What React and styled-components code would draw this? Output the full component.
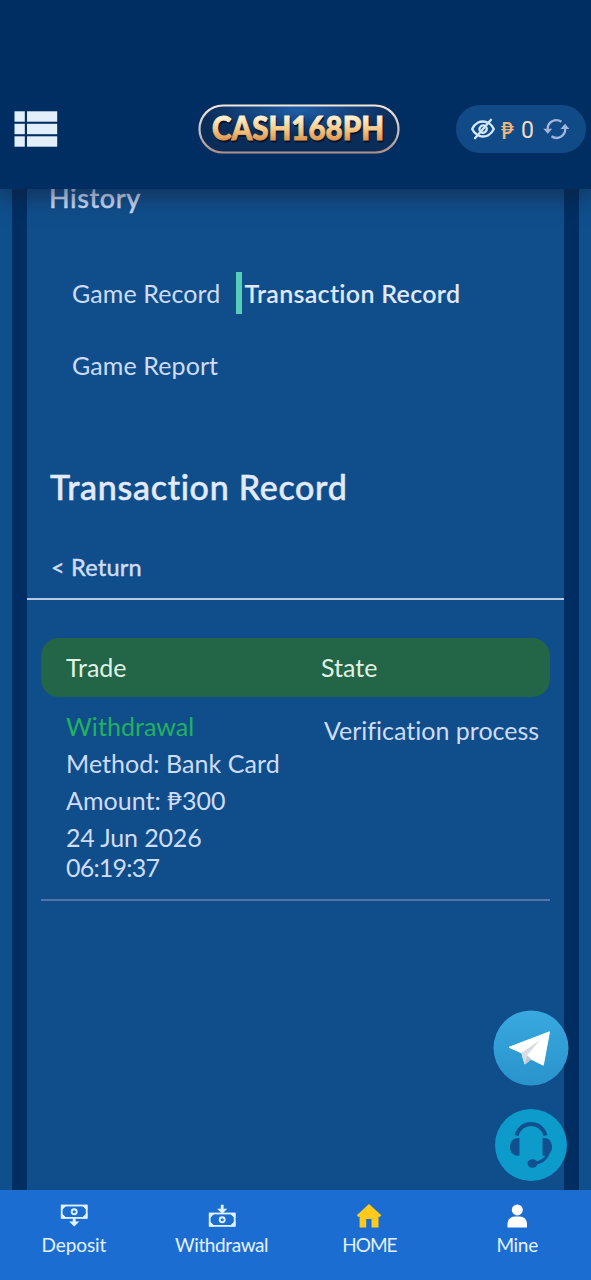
import styled, { createGlobalStyle } from 'styled-components';

const records = [
  {
    id: 1,
    type: 'Withdrawal',
    method: 'Method: Bank Card',
    amount: 'Amount: ₱300',
    date: '24 Jun 2026',
    time: '06:19:37',
    state: 'Verification process',
  },
];

const MenuIcon = () => (
  <svg width="44" height="37" viewBox="0 0 44 37" fill="#e3eefb">
    {[0.3, 12.8, 25.3].map((y) => (
      <g key={y}>
        <rect x="0.5" y={y} width="10.3" height="10.4" />
        <rect x="13" y={y} width="30.2" height="10.4" />
      </g>
    ))}
  </svg>
);

const Logo = () => (
  <svg width="202" height="50" viewBox="0 0 202 50">
    <defs>
      <linearGradient id="gold" x1="0" y1="0" x2="0" y2="1">
        <stop offset="0.25" stopColor="#fff0cf" />
        <stop offset="0.55" stopColor="#f6c887" />
        <stop offset="0.85" stopColor="#dd9148" />
      </linearGradient>
      <linearGradient id="rim" x1="0" y1="0" x2="0" y2="1">
        <stop offset="0" stopColor="#f3e6d6" />
        <stop offset="0.5" stopColor="#c9c4c6" />
        <stop offset="1" stopColor="#b08f86" />
      </linearGradient>
      <radialGradient id="plate" cx="0.5" cy="0.1" r="0.5">
        <stop offset="0" stopColor="#1f5ea8" />
        <stop offset="1" stopColor="#0a2c58" />
      </radialGradient>
    </defs>
    <rect
      x="1.5"
      y="1.5"
      width="199"
      height="47"
      rx="23.5"
      fill="url(#plate)"
      stroke="url(#rim)"
      strokeWidth="2.2"
    />
    <LogoText
      x="15"
      y="37.5"
      textLength="172"
      lengthAdjust="spacingAndGlyphs"
      fill="#06152c"
      stroke="#06152c"
    >
      CASH168PH
    </LogoText>
    <LogoText
      x="14"
      y="36"
      textLength="172"
      lengthAdjust="spacingAndGlyphs"
      fill="url(#gold)"
      stroke="url(#gold)"
    >
      CASH168PH
    </LogoText>
  </svg>
);

const EyeOffIcon = () => (
  <svg
    width="24"
    height="22"
    viewBox="0 0 24 22"
    fill="none"
    stroke="#d5e7fb"
    strokeWidth="2.3"
    strokeLinecap="round"
  >
    <path d="M15.800 4.200C8.800 1.800 3.500 6 1.200 11c1 2.300 2.600 4.300 4.700 5.600" />
    <path d="M8.200 17.800c7.100 2.400 12.300-1.800 14.600-6.800-1-2.300-2.600-4.300-4.600-5.600" />
    <path d="M14 7.700a4 4 0 0 0-5.500 4.600M10 14.300a4 4 0 0 0 5.600-4.600" />
    <path d="M20 1.800 4 20.200" />
  </svg>
);

const RefreshIcon = () => (
  <svg width="27" height="22" viewBox="0 0 27 22" fill="none">
    <g stroke="#a3b4dc" strokeWidth="2.300">
      <path d="M4.700 11.500A8.700 8.700 0 0 1 18.400 3.800" />
      <path d="M22 9.500A8.700 8.700 0 0 1 8.500 18.300" />
    </g>
    <path d="M0.300 10.800h8.900l-4.400 5zM17.500 11h8.900l-4.400-5.200z" fill="#a3b4dc" />
  </svg>
);

const TelegramIcon = () => (
  <svg width="76" height="76" viewBox="0 0 76 76">
    <defs>
      <linearGradient id="sky" x1="0" y1="0" x2="0" y2="1">
        <stop offset="0" stopColor="#38a9df" />
        <stop offset="1" stopColor="#2a93cc" />
      </linearGradient>
    </defs>
    <circle cx="38" cy="38" r="37.500" fill="url(#sky)" />
    <path
      d="M16 37.300 56.500 21.800 50.300 55.200 37.800 49 32 54 28.800 43z"
      fill="#fff"
      stroke="#fff"
      strokeLinejoin="round"
    />
    <path d="M28.500 43 47 30 34.500 44.800 31.500 54.500z" fill="#d5dce4" />
    <path d="M31.500 54.500 34.300 45.500 38.500 49.400z" fill="#bcc6d2" />
  </svg>
);

const HeadsetIcon = () => (
  <svg width="72" height="72" viewBox="0 0 72 72">
    <circle cx="36" cy="36" r="36" fill="#0d9bcb" />
    <path
      d="M21.500 26.500C25.500 11 46.500 11 50.500 26.500"
      fill="none"
      stroke="#10508f"
      strokeWidth="4"
    />
    <path
      d="M24.500 29.200v17.400c-5 .8-9.500-2.700-9.500-8.700s4.500-9.500 9.500-8.700z"
      fill="#10508f"
    />
    <path
      d="M47.500 29.200v17.400c5 .8 9.500-2.700 9.500-8.700s-4.500-9.500-9.500-8.700z"
      fill="#10508f"
    />
    <path
      d="M53 44.500C51 50.500 46 53.800 38 54.500"
      fill="none"
      stroke="#10508f"
      strokeWidth="3"
    />
    <ellipse cx="37.500" cy="54.500" rx="5" ry="4.200" fill="#10508f" />
  </svg>
);

const Banknote = ({ y }) => (
  <g>
    <rect x="1.700" y={y} width="25" height="12.400" fill="none" stroke="#e2f3ff" strokeWidth="1.800" />
    <path
      d={`M1.500 ${y + 4.500}v-4.500h4.500zM26.900 ${y + 4.500}v-4.500h-4.500zM1.500 ${y + 7.900}v4.500h4.500zM26.900 ${y + 7.900}v4.500h-4.500z`}
      fill="#e2f3ff"
      stroke="#e2f3ff"
    />
    <circle cx="14.200" cy={y + 6.200} r="2.500" fill="none" stroke="#e2f3ff" strokeWidth="1.900" />
  </g>
);

const DepositIcon = () => (
  <svg width="28" height="26" viewBox="0 0 28 26">
    <Banknote y={2.500} />
    <path d="M12.800 14.500h2.800v4h3.700l-5.100 5-5.100-5h3.700z" fill="#e2f3ff" />
  </svg>
);

const WithdrawalIcon = () => (
  <svg width="28" height="26" viewBox="0 0 28 26">
    <Banknote y={10.500} />
    <path d="M12.800 1.800h2.800v4h3.700l-5.100 5-5.100-5h3.700z" fill="#e2f3ff" />
  </svg>
);

const HomeIcon = () => (
  <svg width="28" height="26" viewBox="0 0 28 26">
    <path
      d="M14 1 1.800 12.300l1.400 1.500h1.400V24.500h6.600V16h5.300v8.500h7V13.800h1.500l1.300-1.500z"
      fill="#ffca1c"
    />
  </svg>
);

const MineIcon = () => (
  <svg width="28" height="26" viewBox="0 0 28 26" fill="#fff">
    <circle cx="14.300" cy="6.900" r="5.500" />
    <path d="M4.500 24.500v-3.500c0-4.500 3.500-7.500 7.500-7.500h4.500c4.500 0 7.500 3 7.500 7.500v3.500z" />
  </svg>
);

const App = () => (
  <>
    <GlobalStyle />
    <StyledPage>
      <StyledHeader>
        <MenuIcon />
        <Logo />
        <StyledBalance>
          <EyeOffIcon />
          <StyledPeso>₱</StyledPeso>
          <StyledZero>0</StyledZero>
          <RefreshIcon />
        </StyledBalance>
      </StyledHeader>
      <StyledMain>
        <StyledPanel>
          <StyledSection>History</StyledSection>
          <StyledTabs>
            <StyledTab>Game Record</StyledTab>
            <StyledTab $active>Transaction Record</StyledTab>
            <StyledTab>Game Report</StyledTab>
          </StyledTabs>
          <StyledTitle>Transaction Record</StyledTitle>
          <StyledReturn>&lt; Return</StyledReturn>
          <StyledTable>
            <StyledTableHead>
              <span>Trade</span>
              <span>State</span>
            </StyledTableHead>
            {records.map((record) => (
              <StyledRow key={record.id}>
                <StyledTrade>
                  <StyledType>{record.type}</StyledType>
                  <span>{record.method}</span>
                  <span>{record.amount}</span>
                  <StyledDate>
                    {record.date} <StyledTime>{record.time}</StyledTime>
                  </StyledDate>
                </StyledTrade>
                <StyledState>{record.state}</StyledState>
              </StyledRow>
            ))}
          </StyledTable>
        </StyledPanel>
        <StyledFloating>
          <TelegramIcon />
          <HeadsetIcon />
        </StyledFloating>
      </StyledMain>
      <StyledNav>
        <StyledNavItem>
          <DepositIcon />
          Deposit
        </StyledNavItem>
        <StyledNavItem $spacing="-0.4px">
          <WithdrawalIcon />
          Withdrawal
        </StyledNavItem>
        <StyledNavItem $spacing="-1px">
          <HomeIcon />
          HOME
        </StyledNavItem>
        <StyledNavItem $spacing="-0.3px">
          <MineIcon />
          Mine
        </StyledNavItem>
      </StyledNav>
    </StyledPage>
  </>
);

const GlobalStyle = createGlobalStyle`
  * {
    box-sizing: border-box;
  }
  body {
    margin: 0;
    background-color: #0f4f8c;
    font-family: Lato, 'Noto Sans', sans-serif;
    font-variant-ligatures: none;
  }
  svg {
    display: block;
    flex-shrink: 0;
  }
`;

const LogoText = styled.text`
  font-family: Lato, sans-serif;
  font-weight: 900;
  font-size: 32px;
  stroke-width: 0.9px;
`;

const StyledPage = styled.div`
  display: flex;
  flex-direction: column;
  width: 591px;
  height: 1280px;
  overflow: hidden;
`;
const StyledHeader = styled.header`
  position: relative;
  display: flex;
  align-items: center;
  justify-content: space-between;
  flex-shrink: 0;
  height: 189px;
  padding: 69px 5px 0 14px;
  background-color: #002e63;
  box-shadow: 0 6px 22px rgba(20, 30, 50, 0.6);
  z-index: 1;

  > svg:nth-child(2) {
    margin-left: 83px;
  }
`;
const StyledBalance = styled.div`
  display: flex;
  align-items: center;
  width: 130px;
  height: 48px;
  padding-left: 15px;
  border-radius: 24px;
  background-color: #114b87;
`;
const StyledPeso = styled.span`
  width: 14px;
  margin-left: 6px;
  padding-top: 3px;
  color: #eeb679;
  font-weight: 600;
  font-size: 22px;
`;
const StyledZero = styled.span`
  width: 13px;
  margin: 0 9px 0 6px;
  padding-top: 3px;
  color: #f0dcc8;
  font-family: Roboto, sans-serif;
  font-size: 23px;
`;

const StyledMain = styled.main`
  position: relative;
  display: flex;
  flex: 1;
  min-height: 0;
  padding: 0 12px;
  background-color: #0f4f8c;
`;
const StyledPanel = styled.section`
  flex: 1;
  border: solid #002e63;
  border-width: 0 15px;
  background-color: #104e8b;
  color: #cfdcf7;
  font-size: 25px;
  line-height: 30px;
`;
const StyledSection = styled.h2`
  margin: -6px 0 0 22px;
  font-weight: 500;
  font-size: 27px;
  line-height: 30px;
  letter-spacing: 0.6px;
  -webkit-text-stroke: 0.4px;
`;
const StyledTabs = styled.nav`
  display: flex;
  flex-wrap: wrap;
  row-gap: 30px;
  padding: 59px 40px 0 39px;
`;
const StyledTab = styled.a`
  height: 42px;
  border-left: 6px solid ${(props) => (props.$active ? '#55cfb8' : 'transparent')};
  padding-left: ${(props) => (props.$active ? '2px' : 0)};
  margin-right: ${(props) => (props.$active ? 0 : '16px')};
  color: ${(props) => (props.$active ? '#e0e9fc' : '#cfdcf7')};
  font-weight: ${(props) => (props.$active ? 600 : 400)};
  line-height: 42px;
  letter-spacing: ${(props) => (props.$active ? '0.3px' : '0.1px')};
`;
const StyledTitle = styled.h1`
  margin: 80px 0 0 23px;
  color: #e3ebfb;
  font-weight: 500;
  font-size: 34px;
  line-height: 42px;
  letter-spacing: 0.7px;
  -webkit-text-stroke: 0.5px;
`;
const StyledReturn = styled.div`
  height: 92px;
  padding: 44px 0 0 24px;
  border-bottom: 2px solid #b9c9df;
  font-weight: 500;
  font-size: 23.5px;
  letter-spacing: 0.2px;
  -webkit-text-stroke: 0.3px;
`;
const StyledTable = styled.div`
  margin: 38px 14px 0;
`;
const StyledTableHead = styled.div`
  display: grid;
  grid-template-columns: 255px 1fr;
  padding-left: 25px;
  border-radius: 18px;
  background-color: #226547;
  color: #e0f2e4;
  line-height: 59px;
`;
const StyledRow = styled.div`
  display: grid;
  grid-template-columns: 258px 1fr;
  height: 204px;
  padding: 14px 0 0 25px;
  border-bottom: 2px solid #54759f;
`;
const StyledTrade = styled.div`
  display: flex;
  flex-direction: column;
  gap: 7px;
  letter-spacing: 0.05px;
`;
const StyledType = styled.span`
  color: #20b25e;
`;
const StyledDate = styled.span`
  width: 150px;
  letter-spacing: -0.15px;
`;
const StyledTime = styled.span`
  letter-spacing: -0.8px;
`;
const StyledState = styled.span`
  padding-top: 4px;
  white-space: nowrap;
`;

const StyledFloating = styled.div`
  position: absolute;
  right: 22px;
  bottom: 9px;
  display: flex;
  flex-direction: column;
  align-items: center;
  gap: 23px;
`;

const StyledNav = styled.nav`
  display: grid;
  grid-template-columns: repeat(4, 1fr);
  flex-shrink: 0;
  height: 90px;
  padding-top: 13px;
  background-color: #1b6dd2;
  z-index: 1;
`;
const StyledNavItem = styled.a`
  display: flex;
  flex-direction: column;
  align-items: center;
  gap: 4px;
  color: #e4f1ff;
  font-size: 19px;
  line-height: 24px;
  letter-spacing: ${(props) => props.$spacing || '-0.1px'};
`;

export default App;
